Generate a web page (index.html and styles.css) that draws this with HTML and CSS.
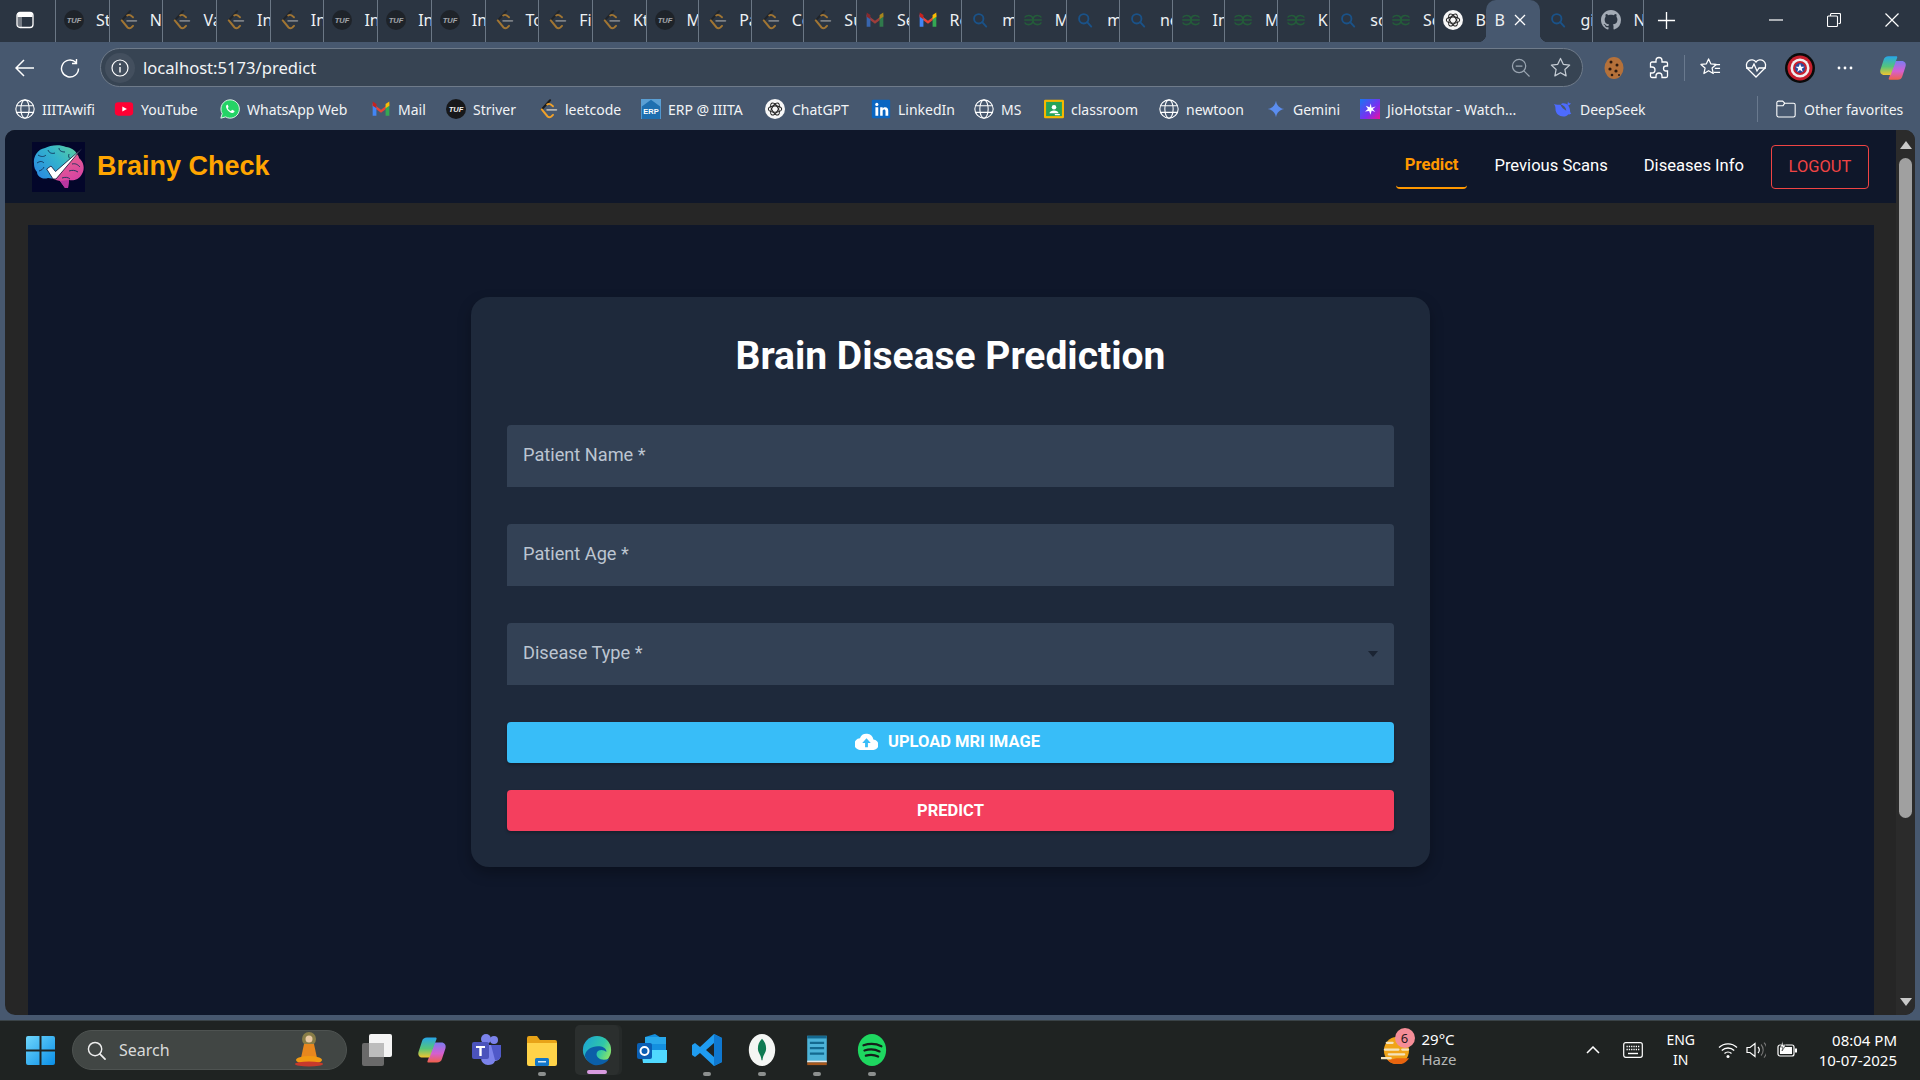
FILE: index.html
```html
<!DOCTYPE html>
<html lang="en">
<head>
<meta charset="utf-8">
<title>Brainy Check</title>
<link rel="stylesheet" href="styles.css">
</head>
<body>
<svg class="defs" width="0" height="0" aria-hidden="true">
  <defs>
    <symbol id="i-tuf" viewBox="0 0 24 24"><circle cx="12" cy="12" r="12" fill="#17181a"/><text x="12" y="15.2" text-anchor="middle" font-family="Liberation Sans" font-size="9" font-weight="700" font-style="italic" fill="#f2f2f2">TUF</text></symbol>
    <symbol id="i-lc" viewBox="0 0 24 24"><path d="M14.500 1.500 4.500 12.500" fill="none" stroke="#1b1b1b" stroke-width="2.400" stroke-linecap="round"/><path d="M4.500 12.500 11.500 21q2 1.800 4.500 0l2-2" fill="none" stroke="#f0a12a" stroke-width="2.400" stroke-linecap="round"/><path d="M11 6.500q2-1.300 4-.1l3 2.400" fill="none" stroke="#f0a12a" stroke-width="2.200" stroke-linecap="round"/><path d="M11 13h11" stroke="#b3b3b3" stroke-width="2.200" stroke-linecap="round"/></symbol>
    <symbol id="i-gmail" viewBox="0 0 24 24"><path d="M2 5.500 12 13 22 5.500V9l-10 7.500L2 9z" fill="#ea4335"/><path d="M2 5.500V20h4.500V9z" fill="#4285f4"/><path d="M22 5.500V20h-4.500V9z" fill="#34a853"/><path d="M17.500 6 22 3v5l-4.500 3z" fill="#fbbc04"/><path d="M2 3l4.500 3v5L2 8z" fill="#c5221f"/></symbol>
    <symbol id="i-search" viewBox="-4 -4 32 32"><circle cx="10" cy="10" r="7.500" fill="none" stroke="#1a5288" stroke-width="3"/><path d="m15.500 15.500 6.500 7" stroke="#1a5288" stroke-width="3" stroke-linecap="round"/></symbol>
    <symbol id="i-gfg" viewBox="0 0 24 24"><path d="M1.500 12H22.500M12 12c0-4-3-5.500-5.500-5.500-2 0-3.700 1-4.500 2.500M12 12c0 4-3 5.500-5.500 5.500-2 0-3.700-1-4.500-2.500M12 12c0-4 3-5.500 5.500-5.500 2 0 3.700 1 4.500 2.500M12 12c0 4 3 5.500 5.500 5.500 2 0 3.700-1 4.500-2.500" fill="none" stroke="#245c3a" stroke-width="1.900"/></symbol>
    <symbol id="i-gpt" viewBox="0 0 24 24"><circle cx="12" cy="12" r="12" fill="#f7f7f7"/><g fill="none" stroke="#222" stroke-width="1.300"><ellipse cx="12" cy="12" rx="8" ry="3.800"/><ellipse cx="12" cy="12" rx="8" ry="3.800" transform="rotate(60 12 12)"/><ellipse cx="12" cy="12" rx="8" ry="3.800" transform="rotate(120 12 12)"/></g></symbol>
    <symbol id="i-gh" viewBox="0 0 16 16"><path fill="#a3abb5" d="M8 0C3.58 0 0 3.58 0 8c0 3.54 2.29 6.53 5.47 7.590.4.070.55-.170.55-.380 0-.190-.010-.820-.010-1.490-2.010.370-2.530-.490-2.690-.940-.090-.230-.480-.940-.820-1.130-.280-.150-.680-.520-.010-.530.630-.010 1.080.580 1.230.820.720 1.210 1.870.870 2.330.660.070-.520.280-.870.510-1.070-1.780-.200-3.640-.890-3.640-3.950 0-.870.310-1.590.820-2.150-.080-.200-.360-1.020.080-2.120 0 0 .670-.210 2.200.820.640-.180 1.320-.270 2-.270s1.360.090 2 .270c1.530-1.040 2.200-.820 2.200-.820.440 1.100.160 1.920.080 2.120.510.560.820 1.270.820 2.150 0 3.070-1.870 3.750-3.650 3.950.290.250.540.730.540 1.480 0 1.070-.010 1.930-.010 2.200 0 .210.150.460.550.380A8.010 8.010 0 0016 8c0-4.420-3.580-8-8-8z"/></symbol>
    <symbol id="i-globe" viewBox="0 0 24 24"><g fill="none" stroke="#fff" stroke-width="1.300"><circle cx="12" cy="12" r="11"/><ellipse cx="12" cy="12" rx="5" ry="11"/><path d="M1.800 8h20.400M1.800 16h20.400"/></g></symbol>
    <symbol id="i-yt" viewBox="0 0 24 24"><rect x="1" y="4" width="22" height="16" rx="4" fill="#ff0033"/><path d="m10 9 5.500 3-5.500 3z" fill="#fff"/></symbol>
    <symbol id="i-wa" viewBox="0 0 24 24"><path d="M12 1A11 11 0 0 0 2.600 17.500L1 23l5.700-1.500A11 11 0 1 0 12 1z" fill="#25d366" stroke="#fff" stroke-width="1"/><path d="M8.500 6.800c-.6.300-1.500 1.400-1.200 3 .500 2.500 3.800 6.400 7.200 7 1.500.200 2.700-.800 2.900-1.700.100-.600-.100-.900-.400-1l-2-1c-.400-.200-.700 0-.900.300l-.600.800c-.200.200-.500.200-.800.100-1.300-.600-2.600-1.800-3.200-3-.200-.300-.100-.500.100-.700l.5-.600c.200-.300.200-.500.100-.800l-.800-2c-.200-.400-.600-.500-.900-.400z" fill="#fff"/></symbol>
    <symbol id="i-erp" viewBox="0 0 24 24"><rect width="24" height="24" fill="#5a9fd4"/><path d="M12 1 1 9v15h22V9z" fill="#1e6fb0"/><text x="12" y="18.500" text-anchor="middle" font-family="Liberation Sans" font-size="9" font-weight="700" fill="#fff">ERP</text></symbol>
    <symbol id="i-in" viewBox="0 0 24 24"><rect x="1" y="1" width="22" height="22" rx="1.500" fill="#0a66c2"/><circle cx="7" cy="6.500" r="1.900" fill="#fff"/><path d="M5.300 10h3.400v10H5.300zM11 10h3v1.400c.700-1.100 1.800-1.600 3-1.600 2.500 0 3.700 1.500 3.700 4.400V20h-3.300v-5.200c0-1.400-.500-2.200-1.700-2.200s-1.700.900-1.700 2.200V20H11z" fill="#fff"/></symbol>
    <symbol id="i-class" viewBox="0 0 24 24"><rect y="1" width="24" height="22" rx="1.500" fill="#f5b800"/><rect x="2.500" y="3.500" width="19" height="17" fill="#25a35a"/><circle cx="12" cy="10" r="2.700" fill="#fff"/><path d="M6.500 17c.5-2.200 2.700-3.300 5.500-3.300s5 1.100 5.500 3.300z" fill="#fff"/><rect x="13" y="18" width="6" height="1.500" fill="#fff"/></symbol>
    <symbol id="i-gem" viewBox="0 0 24 24"><path d="M12 2c.8 5.500 4.500 9.200 10 10-5.500.8-9.200 4.500-10 10-.8-5.500-4.500-9.200-10-10 5.500-.8 9.200-4.500 10-10z" fill="#5b8def"/></symbol>
    <symbol id="i-jio" viewBox="0 0 24 24"><defs><linearGradient id="g-jio" x1="0" y1="0" x2="1" y2="1"><stop offset="0" stop-color="#1976f2"/><stop offset=".6" stop-color="#7a2ff0"/><stop offset="1" stop-color="#f0109a"/></linearGradient></defs><rect width="24" height="24" fill="url(#g-jio)"/><path d="M13 5.500l.8 5 5-1.500-3.500 3 3 3.500-4.200-1.700L12.500 19 11 14.500 6 15l3.500-3L7 8l4.500 2z" fill="#fff"/></symbol>
    <symbol id="i-ds" viewBox="0 0 24 24"><path d="M1 6c1.500 1.500 2 3.500 2 6 0 5.500 4.500 9 9.500 9 2.500 0 4.500-1 6-2.800 1 .5 2.200.3 3.500-.700-1-.500-1.500-1.500-1.500-3 0-5.500-3.500-9.500-8-9.500-1.500 0-2.500.500-3 1.500 3 .500 6 3 6.500 7.500-3-1-6-4.500-7-7C7 7 4 7 1 6z" fill="#4d6bfe"/><path d="M18 3c.5 1.500 1.500 2.200 3.500 2.200-1 1.800-2.500 3-4.500 3z" fill="#4d6bfe"/></symbol>
    <symbol id="i-folder" viewBox="0 0 24 24"><path d="M1 4.500a2 2 0 0 1 2-2h5l2.500 2.500H21a2 2 0 0 1 2 2v12.500a2 2 0 0 1-2 2H3a2 2 0 0 1-2-2zM1 8h7.500l2-3" fill="none" stroke="#fff" stroke-width="1.300"/></symbol>
    <symbol id="i-copilot" viewBox="0 0 24 24"><defs><linearGradient id="g-c1" x1="0" y1="0" x2="0" y2="1"><stop offset="0" stop-color="#27a6e8"/><stop offset=".55" stop-color="#55c57a"/><stop offset="1" stop-color="#f2c530"/></linearGradient><linearGradient id="g-c2" x1="0" y1="0" x2="0" y2="1"><stop offset="0" stop-color="#7b7cf0"/><stop offset=".55" stop-color="#d55fd0"/><stop offset="1" stop-color="#f0604a"/></linearGradient></defs><path d="M16 22H9.500c-1 0-1.500-.5-1-1.500L14 6h5.500c2.500 0 4 2 3.300 4.500L20 19c-.5 2-2 3-4 3z" fill="url(#g-c2)"/><path d="M8 2h6.500c1 0 1.500.5 1 1.500L10 18H4.500C2 18 .5 16 1.200 13.500L4 5c.5-2 2-3 4-3z" fill="url(#g-c1)"/></symbol>
  </defs>
</svg>

<header class="tabstrip">
  <svg class="panel-icon" viewBox="0 0 18 18"><rect x="1" y="1.500" width="16" height="15" rx="3" fill="none" stroke="#fff" stroke-width="1.300"/><rect x="1.500" y="2" width="15" height="4" fill="#fff"/><rect x="1.500" y="2" width="4.500" height="14" fill="#fff" opacity=".35"/></svg>
  <div class="tabs">
    <div class="tab"><svg class="fav dim"><use href="#i-tuf"/></svg><span>St</span></div>
    <div class="tab"><svg class="fav dim"><use href="#i-lc"/></svg><span>N</span></div>
    <div class="tab"><svg class="fav dim"><use href="#i-lc"/></svg><span>Va</span></div>
    <div class="tab"><svg class="fav dim"><use href="#i-lc"/></svg><span>In</span></div>
    <div class="tab"><svg class="fav dim"><use href="#i-lc"/></svg><span>In</span></div>
    <div class="tab"><svg class="fav dim"><use href="#i-tuf"/></svg><span>In</span></div>
    <div class="tab"><svg class="fav dim"><use href="#i-tuf"/></svg><span>In</span></div>
    <div class="tab"><svg class="fav dim"><use href="#i-tuf"/></svg><span>In</span></div>
    <div class="tab"><svg class="fav dim"><use href="#i-lc"/></svg><span>To</span></div>
    <div class="tab"><svg class="fav dim"><use href="#i-lc"/></svg><span>Fi</span></div>
    <div class="tab"><svg class="fav dim"><use href="#i-lc"/></svg><span>Kt</span></div>
    <div class="tab"><svg class="fav dim"><use href="#i-tuf"/></svg><span>M</span></div>
    <div class="tab"><svg class="fav dim"><use href="#i-lc"/></svg><span>Pa</span></div>
    <div class="tab"><svg class="fav dim"><use href="#i-lc"/></svg><span>Co</span></div>
    <div class="tab"><svg class="fav dim"><use href="#i-lc"/></svg><span>Su</span></div>
    <div class="tab"><svg class="fav dim"><use href="#i-gmail"/></svg><span>Se</span></div>
    <div class="tab"><svg class="fav"><use href="#i-gmail"/></svg><span>Re</span></div>
    <div class="tab"><svg class="fav"><use href="#i-search"/></svg><span>m</span></div>
    <div class="tab"><svg class="fav"><use href="#i-gfg"/></svg><span>M</span></div>
    <div class="tab"><svg class="fav"><use href="#i-search"/></svg><span>m</span></div>
    <div class="tab"><svg class="fav"><use href="#i-search"/></svg><span>ne</span></div>
    <div class="tab"><svg class="fav"><use href="#i-gfg"/></svg><span>In</span></div>
    <div class="tab"><svg class="fav"><use href="#i-gfg"/></svg><span>M</span></div>
    <div class="tab"><svg class="fav"><use href="#i-gfg"/></svg><span>K</span></div>
    <div class="tab"><svg class="fav"><use href="#i-search"/></svg><span>sc</span></div>
    <div class="tab"><svg class="fav"><use href="#i-gfg"/></svg><span>Sc</span></div>
    <div class="tab tab-plain"><svg class="fav"><use href="#i-gpt"/></svg><span>Br</span></div>
    <div class="tab tab-active"><span>B</span><svg class="tab-x" viewBox="0 0 12 12"><path d="m1 1 10 10M11 1 1 11" stroke="#fff" stroke-width="1.300"/></svg></div>
    <div class="tab tab-after"><svg class="fav"><use href="#i-search"/></svg><span>gi</span></div>
    <div class="tab tab-after"><svg class="fav"><use href="#i-gh"/></svg><span>N</span></div>
  </div>
  <svg class="plus" viewBox="0 0 20 20"><path d="M10 1v18M1 10h18" stroke="#fff" stroke-width="1.400"/></svg>
  <div class="winctl">
    <svg viewBox="0 0 14 14"><path d="M0 7h14" stroke="#fff" stroke-width="1.200"/></svg>
    <svg viewBox="0 0 14 14"><path d="M3.500 2.500V1.500a1 1 0 0 1 1-1h8a1 1 0 0 1 1 1v8a1 1 0 0 1-1 1h-1M1.500 3h8a1 1 0 0 1 1 1v8.500a1 1 0 0 1-1 1h-8a1 1 0 0 1-1-1V4a1 1 0 0 1 1-1z" fill="none" stroke="#fff" stroke-width="1.100"/></svg>
    <svg viewBox="0 0 14 14"><path d="m.5.500 13 13M13.500.500l-13 13" stroke="#fff" stroke-width="1.200"/></svg>
  </div>
</header>

<div class="toolbar">
  <svg class="tb-back" viewBox="0 0 20 20"><path d="M1 10h18M9 2l-8 8 8 8" fill="none" stroke="#fff" stroke-width="1.500"/></svg>
  <svg class="tb-reload" viewBox="0 0 20 20"><path d="M16 4.500A8.500 8.500 0 1 0 18.500 10.500M16.500 1v4.500H12" fill="none" stroke="#fff" stroke-width="1.400"/></svg>
  <div class="address">
    <span class="addr-info"><svg viewBox="0 0 18 18"><circle cx="9" cy="9" r="8" fill="none" stroke="#fff" stroke-width="1.200"/><path d="M9 8v5.500" stroke="#fff" stroke-width="1.400"/><circle cx="9" cy="5.300" r="1" fill="#fff"/></svg></span>
    <span class="addr-url">localhost:5173/predict</span>
    <svg class="addr-zoom" viewBox="0 0 20 20"><circle cx="8.500" cy="8.500" r="7" fill="none" stroke="#9aa5b1" stroke-width="1.300"/><path d="M5 8.500h7M13.500 13.500l6 6" stroke="#9aa5b1" stroke-width="1.300"/></svg>
    <svg class="addr-star" viewBox="0 0 22 22"><path d="m11 1.500 2.900 6.200 6.700.8-5 4.600 1.300 6.700L11 16.500l-5.900 3.300 1.300-6.700-5-4.600 6.700-.8z" fill="none" stroke="#c5ccd4" stroke-width="1.300" stroke-linejoin="round"/></svg>
  </div>
  <svg class="tb-cookie" viewBox="0 0 20 24"><ellipse cx="10" cy="12" rx="9.500" ry="11" fill="#b5713a"/><g fill="#2d1a10"><circle cx="7" cy="6" r="1.500"/><circle cx="13" cy="9" r="1.500"/><circle cx="6" cy="13" r="1.600"/><circle cx="12" cy="15" r="1.600"/><circle cx="8" cy="19" r="1.300"/><circle cx="15" cy="19" r="1"/></g></svg>
  <svg class="tb-puzzle" viewBox="0 0 20 24"><path d="M7 4.500a3 3 0 0 1 6 0V6h4a1.500 1.500 0 0 1 1.500 1.500V10H17a2.500 2.500 0 0 0 0 5h1.500v5a1.500 1.500 0 0 1-1.500 1.500h-4V20a3 3 0 0 0-6 0v1.500H3A1.500 1.500 0 0 1 1.500 20v-3H3a3 3 0 0 0 0-6H1.500V7.500A1.500 1.500 0 0 1 3 6h4z" fill="none" stroke="#fff" stroke-width="1.300"/></svg>
  <span class="tb-sep"></span>
  <svg class="tb-favs" viewBox="0 0 22 22"><path d="M9 2l2.300 5.200 5.700.6-4.300 3.800 1.200 5.700L9 14.400 4.100 17.300l1.200-5.700L1 7.800l5.700-.6z" fill="none" stroke="#fff" stroke-width="1.300" stroke-linejoin="round"/><path d="M15 8h6M15.500 12h5.500M14.500 16h6.500" stroke="#fff" stroke-width="1.300"/></svg>
  <svg class="tb-heart" viewBox="0 0 22 22"><path d="M11 20 2.500 11.500A5.300 5.300 0 0 1 11 5a5.300 5.300 0 0 1 8.500 6.500z" fill="none" stroke="#fff" stroke-width="1.300"/><path d="M1 11h6l2-4 3 7 2-3h7" fill="none" stroke="#fff" stroke-width="1.300"/></svg>
  <svg class="tb-avatar" viewBox="0 0 30 30"><circle cx="15" cy="15" r="15" fill="#0a0a0a"/><circle cx="15" cy="15" r="12.500" fill="#c8202e"/><circle cx="15" cy="15" r="9.500" fill="#f0f0f0"/><circle cx="15" cy="15" r="7" fill="#c8202e"/><circle cx="15" cy="15" r="5" fill="#2a4a9c"/><path d="m15 10.500 1.200 3.200h3.300l-2.700 2 1 3.200-2.800-2-2.800 2 1-3.200-2.700-2h3.300z" fill="#fff"/></svg>
  <svg class="tb-dots" viewBox="0 0 16 20"><circle cx="2" cy="10" r="1.400" fill="#fff"/><circle cx="8" cy="10" r="1.400" fill="#fff"/><circle cx="14" cy="10" r="1.400" fill="#fff"/></svg>
  <svg class="tb-copilot"><use href="#i-copilot"/></svg>
</div>

<nav class="bookmarks">
  <div class="bm"><svg><use href="#i-globe"/></svg><span>IIITAwifi</span></div>
  <div class="bm"><svg><use href="#i-yt"/></svg><span>YouTube</span></div>
  <div class="bm"><svg><use href="#i-wa"/></svg><span>WhatsApp Web</span></div>
  <div class="bm"><svg><use href="#i-gmail"/></svg><span>Mail</span></div>
  <div class="bm"><svg><use href="#i-tuf"/></svg><span>Striver</span></div>
  <div class="bm"><svg><use href="#i-lc"/></svg><span>leetcode</span></div>
  <div class="bm"><svg><use href="#i-erp"/></svg><span>ERP @ IIITA</span></div>
  <div class="bm"><svg><use href="#i-gpt"/></svg><span>ChatGPT</span></div>
  <div class="bm"><svg><use href="#i-in"/></svg><span>LinkedIn</span></div>
  <div class="bm"><svg><use href="#i-globe"/></svg><span>MS</span></div>
  <div class="bm"><svg><use href="#i-class"/></svg><span>classroom</span></div>
  <div class="bm"><svg><use href="#i-globe"/></svg><span>newtoon</span></div>
  <div class="bm"><svg><use href="#i-gem"/></svg><span>Gemini</span></div>
  <div class="bm"><svg><use href="#i-jio"/></svg><span>JioHotstar - Watch...</span></div>
  <div class="bm"><svg><use href="#i-ds"/></svg><span>DeepSeek</span></div>
  <div class="bm bm-other"><svg><use href="#i-folder"/></svg><span>Other favorites</span></div>
</nav>

<div class="viewport">
  <div class="page">
    <div class="navbar">
      <svg class="logo" viewBox="0 0 53 50">
        <defs>
          <linearGradient id="g-left" x1="0" y1=".7" x2="1" y2="0"><stop offset="0" stop-color="#2b8fe0"/><stop offset=".5" stop-color="#33b4cc"/><stop offset="1" stop-color="#5fcf9c"/></linearGradient>
          <linearGradient id="g-right" x1="0" y1="0" x2=".4" y2="1"><stop offset="0" stop-color="#ec6a8a"/><stop offset="1" stop-color="#d43fa5"/></linearGradient>
        </defs>
        <rect width="53" height="50" fill="#03062a"/>
        <path d="M2 22C1 14 6 7 13 6 18 3 28 2 34 5c5 .5 9 3 11 7L23 36c-3 1-5 0-7 0-6 2-11-2-11-6-2-2-3-5-3-8z" fill="url(#g-left)"/>
        <path d="M45 12c1 1 2 3 2 4 5 4 6 11 3 16-3 6-9 7-13 6l-1 8h-3l-5-7c-3-1-5-1-8-3z" fill="url(#g-right)"/>
        <path d="M28 39l5 7h3l1-8z" fill="#b8369f"/>
        <path d="M6 13c3 2 6 2 8 0M16 8c1 3 4 4 7 3M27 6c0 3 3 4 6 4M5 21c3-2 5-2 7 0M7 29c3-1 4-2 5-4M37 12c-1 3 0 4 2 5M40 22c4-1 6 1 8 3M37 29c3-1 6-1 9 1M30 36c3-1 6-1 8 1" fill="none" stroke="#12335a" stroke-width=".9"/>
        <path d="M14.700 27 19 24 23.500 29.500 49.700 6.700 24 37H21z" fill="#fff" stroke="#0b1030" stroke-width=".8"/>
      </svg>
      <span class="brand">Brainy Check</span>
      <div class="nav-links">
        <a class="nav-link nav-active">Predict</a>
        <a class="nav-link">Previous Scans</a>
        <a class="nav-link">Diseases Info</a>
        <a class="logout">LOGOUT</a>
      </div>
    </div>
    <main class="main">
      <section class="card">
        <h1 class="card-title">Brain Disease Prediction</h1>
        <div class="field"><span class="field-label">Patient Name *</span></div>
        <div class="field"><span class="field-label">Patient Age *</span></div>
        <div class="field"><span class="field-label">Disease Type *</span><span class="caret"></span></div>
        <button class="btn btn-upload" type="button"><svg viewBox="0 0 24 18"><path d="M19.300 7A7.500 7.500 0 0 0 5 5.500 6 6 0 0 0 6 18h13a5 5 0 0 0 .300-11z" fill="#fff"/><path d="M12 5.500 7.500 10.500H10.500V15h3V10.500h3z" fill="#38bdf8"/></svg>UPLOAD MRI IMAGE</button>
        <button class="btn btn-predict" type="button">PREDICT</button>
      </section>
    </main>
  </div>
  <div class="scrollbar">
    <span class="sb-up"></span>
    <span class="sb-thumb"></span>
    <span class="sb-down"></span>
  </div>
</div>

<footer class="taskbar">
  <svg class="start" viewBox="0 0 29 29"><defs><linearGradient id="g-win" x1="0" y1="0" x2="1" y2="1"><stop offset="0" stop-color="#6fd6fb"/><stop offset="1" stop-color="#0a8fe8"/></linearGradient></defs><path fill="url(#g-win)" d="M0 2a2 2 0 0 1 2-2h11.500v13.500H0zM15.500 0H27a2 2 0 0 1 2 2v11.500H15.500zM0 15.500h13.500V29H2a2 2 0 0 1-2-2zM15.500 15.500H29V27a2 2 0 0 1-2 2H15.500z"/></svg>
  <div class="searchbox">
    <svg viewBox="0 0 20 20"><circle cx="8.500" cy="8.500" r="7" fill="none" stroke="#eee" stroke-width="1.500"/><path d="m13.500 13.500 5.500 5.500" stroke="#eee" stroke-width="1.800" stroke-linecap="round"/></svg>
    <span>Search</span>
    <svg class="sage" viewBox="0 0 30 36"><circle cx="15" cy="7" r="7" fill="#b7a24a" opacity=".6"/><circle cx="15" cy="7" r="3.500" fill="#e9c9a5"/><path d="M10 12h10l3 14H7z" fill="#e8871e"/><ellipse cx="15" cy="28" rx="13" ry="4" fill="#f29a12"/><ellipse cx="15" cy="32" rx="14" ry="2.500" fill="#c7392c"/></svg>
  </div>
  <div class="apps">
    <div class="app"><svg viewBox="0 0 30 32"><rect x="0" y="9" width="22" height="23" rx="2" fill="#6a6a6a"/><rect x="7" y="0" width="23" height="23" rx="2" fill="#f4f4f4"/><rect x="7" y="9" width="15" height="14" fill="#bdbdbd"/></svg></div>
    <div class="app"><svg><use href="#i-copilot"/></svg></div>
    <div class="app"><svg viewBox="0 0 30 32"><circle cx="22" cy="6" r="4" fill="#7b83eb"/><circle cx="14" cy="5" r="5" fill="#7b83eb"/><path d="M12 11h17v10a6 6 0 0 1-6 6c-1 3-4 4-7 4a7 7 0 0 1-7-7V11z" fill="#7b83eb"/><path d="M19 11h10v10a5 5 0 0 1-6 5z" fill="#5059c9"/><rect x="0" y="8" width="17" height="17" rx="2" fill="#4b53bc"/><path d="M4 12h9v2h-3.300v8H7.300v-8H4z" fill="#fff"/></svg></div>
    <div class="app app-open"><svg viewBox="0 0 30 32"><path d="M0 4a2 2 0 0 1 2-2h8l3 4h15a2 2 0 0 1 2 2v4H0z" fill="#e8a317"/><path d="M0 9h30v21a2 2 0 0 1-2 2H2a2 2 0 0 1-2-2z" fill="#ffd349"/><rect x="8" y="24" width="14" height="8" rx="1.500" fill="#1276c9"/><rect x="11" y="27" width="8" height="1.500" fill="#cfe7fa"/></svg></div>
    <div class="app app-active"><svg viewBox="0 0 30 34"><defs><linearGradient id="g-edge" x1="0" y1="0" x2="1" y2=".5"><stop offset="0" stop-color="#1aa0d8"/><stop offset=".7" stop-color="#2fc8a8"/><stop offset="1" stop-color="#7ee070"/></linearGradient></defs><circle cx="15" cy="17" r="15" fill="url(#g-edge)"/><path d="M2 23c2 7 9 11 15 10 5-1 9-3 11-7-4 2-9 2-12-1-2-2-2-5 0-7 3-2 7-1 9 1 0-4-4-6-9-6-7 0-13 4-14 10z" fill="#0b5fa8"/></svg></div>
    <div class="app"><svg viewBox="0 0 30 32"><path d="M8 3 18 0l11 7v20a2 2 0 0 1-2 2H10z" fill="#1490df"/><path d="M8 3h10v7H8zM18 3h11v7H18z" fill="#28a8ea"/><path d="M4 16h26v11a2 2 0 0 1-2 2H6z" fill="#50d9ff"/><rect x="0" y="9" width="15" height="16" rx="2" fill="#0a5fb4"/><circle cx="7.500" cy="17" r="4" fill="none" stroke="#fff" stroke-width="2"/></svg></div>
    <div class="app app-open"><svg viewBox="0 0 30 32"><path d="M22 0 30 4v24l-8 4L8 19l-5 4-3-2v-10l3-2 5 4zM22 9l-8 7 8 7z" fill="#1f9cf0"/><path d="M22 0l8 4v24l-8 4z" fill="#0f78d0"/></svg></div>
    <div class="app app-open"><svg viewBox="0 0 28 34"><ellipse cx="14" cy="17" rx="14" ry="17" fill="#f4f6f4"/><path d="M14 5c4 4 5 9 4 13-1 3-3 5-3.500 10h-1C13 23 11 21 10 18c-1-4 0-9 4-13z" fill="#0f7a52"/></svg></div>
    <div class="app app-open"><svg viewBox="0 0 24 36"><rect x="1" y="2" width="22" height="30" fill="#4cb3d8"/><path d="M1 30h22v2H1z" fill="#e8e8e8"/><path d="M1 32h22v3H1z" fill="#a8581c"/><path d="M1 2h22v3H1z" fill="#14688f"/><path d="M4 10h16M4 16h16M4 22h16" stroke="#13698f" stroke-width="2.500"/></svg></div>
    <div class="app app-open"><svg viewBox="0 0 30 34"><ellipse cx="15" cy="17" rx="15" ry="17" fill="#1ed760"/><path d="M6 12c6-2 13-2 19 1M7 17.500c5-1.500 11-1.500 16 1M8.500 23c4-1 9-1 13 1" fill="none" stroke="#14201a" stroke-width="2.400" stroke-linecap="round"/></svg></div>
  </div>
  <div class="weather">
    <svg class="w-icon" viewBox="0 0 30 28"><ellipse cx="16" cy="14" rx="13" ry="14" fill="#f0a419"/><path d="M16 22h13a13 14 0 0 1-13 6 13 14 0 0 1-9-4z" fill="#e8640f"/><path d="M6 6h6M4 13h14M22 13h6M8 18h16M0 22h10" stroke="#f3e3bd" stroke-width="2.400" stroke-linecap="round"/></svg>
    <span class="w-badge">6</span>
    <div class="w-text"><span>29°C</span><span class="w-sub">Haze</span></div>
  </div>
  <div class="tray">
    <svg class="t-chev" viewBox="0 0 14 8"><path d="m1 7 6-6 6 6" fill="none" stroke="#fff" stroke-width="1.500"/></svg>
    <svg class="t-kb" viewBox="0 0 20 16"><rect x=".7" y=".7" width="18.600" height="14.600" rx="2" fill="none" stroke="#fff" stroke-width="1.200"/><path d="M3.500 4.500h13M3.500 7.500h13" stroke="#fff" stroke-width="1.400" stroke-dasharray="1.300 1"/><path d="M5 11.500h10" stroke="#fff" stroke-width="1.400"/></svg>
    <div class="t-lang"><span>ENG</span><span>IN</span></div>
    <svg class="t-wifi" viewBox="0 0 20 18"><path d="M1 6.500a13 13 0 0 1 18 0M3.800 9.500a9 9 0 0 1 12.400 0M6.500 12.500a5 5 0 0 1 7 0" fill="none" stroke="#fff" stroke-width="1.300"/><circle cx="10" cy="15.500" r="1.500" fill="#fff"/></svg>
    <svg class="t-vol" viewBox="0 0 20 18"><path d="M1 6.500h3L9 2.500v13l-5-4H1z" fill="none" stroke="#fff" stroke-width="1.200"/><path d="M12 6a4.500 4.500 0 0 1 0 6" fill="none" stroke="#fff" stroke-width="1.200"/><path d="M15 3.500a8 8 0 0 1 0 11M18 1.500a11 11 0 0 1 0 15" fill="none" stroke="#777" stroke-width="1.100"/></svg>
    <svg class="t-bat" viewBox="0 0 20 18"><rect x="1" y="4" width="16" height="11" rx="2" fill="none" stroke="#fff" stroke-width="1.200"/><rect x="3" y="6" width="12" height="7" fill="#fff"/><rect x="18" y="7.500" width="2" height="4" fill="#fff"/><path d="M6 0 3 6h3l-1 4 4-6H6z" fill="#fff" stroke="#1f2322" stroke-width=".6"/></svg>
    <div class="t-clock"><span>08:04 PM</span><span>10-07-2025</span></div>
  </div>
</footer>
</body>
</html>
```

FILE: styles.css
```css
* { box-sizing: border-box; }
html, body { margin: 0; padding: 0; }
body {
  width: 1920px;
  height: 1080px;
  overflow: hidden;
  display: flex;
  flex-direction: column;
  background: #47586f;
  font-family: "Noto Sans", "Open Sans", sans-serif;
  color: #fff;
}
.defs { position: absolute; }

/* Tab strip */
.tabstrip {
  height: 42px;
  flex: none;
  display: flex;
  align-items: center;
  padding-bottom: 2px;
  background: #2b3542;
}
.panel-icon { width: 18px; height: 18px; margin-left: 16px; flex: none; }
.tabs { display: flex; height: 42px; margin-left: 21px; flex: none; align-self: flex-start; }
.tab {
  width: 52.6px;
  height: 42px;
  flex: none;
  display: flex;
  align-items: center;
  padding: 0 0 2px 8px;
  gap: 12px;
  overflow: hidden;
  border-left: 1px solid #6b7785;
  font-size: 16px;
  color: #eef1f4;
  white-space: nowrap;
  position: relative;
}
.tab span { flex: none; }
.tab:nth-child(-n+11) { width: 53.7px; }
.fav { width: 20px; height: 20px; flex: none; }
.fav.dim { opacity: .6; }
.tab-active {
  width: 54px;
  background: #47586f;
  border: 0;
  border-radius: 10px 10px 0 0;
  padding-left: 8px;
  gap: 9px;
  overflow: visible;
}
.tab-active::before,
.tab-active::after {
  content: "";
  position: absolute;
  bottom: 0;
  width: 8px;
  height: 8px;
}
.tab-active::before {
  left: -8px;
  background: radial-gradient(circle at 0 0, transparent 8px, #47586f 8.5px);
}
.tab-active::after {
  right: -8px;
  background: radial-gradient(circle at 100% 0, transparent 8px, #47586f 8.5px);
}
.tab-plain { width: 52px; }
.tab-after { width: 52px; }
.tab-active + .tab { border-left: 0; }
.tab-after:last-child { border-right: 1px solid #6b7785; }
.tab-x { width: 12px; height: 12px; flex: none; }
.plus { width: 19px; height: 19px; margin-left: 13px; flex: none; }
.winctl {
  margin-left: auto;
  display: flex;
  gap: 44px;
  padding-right: 21px;
  align-items: center;
}
.winctl svg { width: 14px; height: 14px; }

/* Toolbar */
.toolbar {
  height: 48px;
  flex: none;
  display: flex;
  align-items: center;
  padding: 6px 0 3px;
}
.tb-back { width: 20px; height: 20px; margin-left: 15px; flex: none; }
.tb-reload { width: 20px; height: 20px; margin-left: 25px; flex: none; }
.address {
  width: 1483px;
  height: 39px;
  margin-left: 20px;
  flex: none;
  display: flex;
  align-items: center;
  background: #374453;
  border: 1px solid #6f7b8a;
  border-radius: 20px;
  padding-left: 4px;
}
.addr-info {
  width: 30px;
  height: 30px;
  border-radius: 50%;
  background: #434f5e;
  display: flex;
  align-items: center;
  justify-content: center;
  flex: none;
}
.addr-info svg { width: 18px; height: 18px; }
.addr-url { margin-left: 8px; font-size: 16.6px; color: #f2f4f6; }
.addr-zoom { width: 19px; height: 19px; margin-left: auto; flex: none; }
.addr-star { width: 21px; height: 21px; margin-left: 20px; margin-right: 11px; flex: none; }
.tb-cookie { width: 20px; height: 24px; margin-left: 21px; flex: none; }
.tb-puzzle { width: 20px; height: 24px; margin-left: 25px; flex: none; }
.tb-sep { width: 1px; height: 26px; background: #69798e; margin-left: 15px; flex: none; }
.tb-favs { width: 21px; height: 21px; margin-left: 15px; flex: none; }
.tb-heart { width: 22px; height: 22px; margin-left: 24px; flex: none; }
.tb-avatar { width: 30px; height: 30px; margin-left: 18px; flex: none; }
.tb-dots { width: 16px; height: 20px; margin-left: 22px; flex: none; }
.tb-copilot { width: 28px; height: 28px; margin-left: 26px; flex: none; }

/* Bookmarks */
.bookmarks {
  height: 40px;
  flex: none;
  display: grid;
  grid-template-columns: 99px 106px 151px 75px 92px 103px 124px 106px 103px 70px 115px 107px 94px 193px 204px 1fr;
  align-items: center;
  padding: 0 0 2px 15px;
  font-size: 14px;
  color: #f2f4f6;
}
.bm { display: flex; align-items: center; gap: 7px; white-space: nowrap; }
.bm svg { width: 20px; height: 20px; flex: none; }
.bm-other { border-left: 1px solid #69798e; padding-left: 18px; height: 26px; gap: 8px; }

/* Browser viewport */
.viewport {
  height: 885px;
  flex: none;
  margin: 0 5px;
  display: flex;
  border-radius: 10px;
  overflow: hidden;
  background: #262626;
}
.page { flex: 1; display: flex; flex-direction: column; min-width: 0; }
.navbar {
  height: 73px;
  flex: none;
  display: flex;
  align-items: center;
  background: #0f172a;
  padding: 0 27px;
  font-family: Roboto, sans-serif;
}
.logo { width: 53px; height: 50px; flex: none; }
.brand {
  margin: 0 0 1px 12px;
  font-family: "Liberation Sans", Arial, sans-serif;
  font-weight: 700;
  font-size: 27px;
  color: #ffa500;
}
.nav-links { margin-left: auto; display: flex; align-items: center; gap: 18px; height: 44px; }
.nav-link {
  height: 44px;
  padding: 0 9px 3px;
  display: flex;
  align-items: center;
  font-size: 16.6px;
  font-weight: 400;
  color: #fff;
  border-radius: 4px;
}
.nav-active {
  color: #ff9800;
  font-weight: 700;
  border-bottom: 2px solid #ff9800;
  padding-bottom: 3px;
}
.logout {
  width: 98px;
  height: 44px;
  display: flex;
  align-items: center;
  justify-content: center;
  padding-bottom: 1px;
  border: 1px solid #ef4444;
  border-radius: 4px;
  color: #ef4444;
  font-size: 16.5px;
}
.main {
  flex: 1;
  margin: 22px 22px 0 23px;
  padding: 72px 1px 0 0;
  background: #0f172a;
  display: flex;
  flex-direction: column;
  align-items: center;
  font-family: Roboto, sans-serif;
}
.card {
  width: 959px;
  height: 570px;
  flex: none;
  background: #1e293b;
  border-radius: 18px;
  padding: 36px;
  box-shadow: 0 6px 14px rgba(0, 0, 0, .28);
  display: flex;
  flex-direction: column;
  gap: 37px;
}
.card-title {
  margin: 0 0 11px;
  height: 44px;
  line-height: 46px;
  font-size: 39px;
  font-weight: 700;
  text-align: center;
  color: #fff;
}
.field {
  height: 62px;
  flex: none;
  background: #334155;
  border-radius: 4px 4px 0 0;
  display: flex;
  align-items: flex-start;
  justify-content: space-between;
  padding: 18px 16px 0;
  font-size: 18.2px;
  line-height: 24px;
  color: #bcc5d1;
}
.caret {
  width: 0;
  height: 0;
  margin-top: 10px;
  border-left: 5.5px solid transparent;
  border-right: 5.5px solid transparent;
  border-top: 6px solid #1b2433;
}
.btn {
  height: 41px;
  flex: none;
  border: 0;
  border-radius: 4px;
  padding: 0 0 2px;
  display: flex;
  align-items: center;
  justify-content: center;
  gap: 10px;
  color: #fff;
  font-family: Roboto, sans-serif;
  font-size: 16.5px;
  font-weight: 700;
  box-shadow: 0 2px 3px rgba(0, 0, 0, .25);
}
.btn svg { width: 23px; height: 17px; }
.btn-upload { background: #38bdf8; padding-right: 6px; }
.btn-predict { background: #f43f5e; margin-top: -10px; padding-bottom: 1px; }

/* Scrollbar */
.scrollbar {
  width: 19px;
  flex: none;
  background: #2b2b2b;
  display: flex;
  flex-direction: column;
  align-items: center;
  padding: 11px 0 9px;
}
.sb-up, .sb-down { width: 0; height: 0; border-left: 6.5px solid transparent; border-right: 6.5px solid transparent; flex: none; }
.sb-up { border-bottom: 8px solid #c8c8c8; }
.sb-down { border-top: 8px solid #c8c8c8; margin-top: auto; }
.sb-thumb { width: 13px; height: 660px; margin-top: 9px; background: #a0a0a0; border-radius: 7px; flex: none; }

/* Taskbar */
.taskbar {
  margin-top: 5px;
  height: 60px;
  flex: none;
  display: flex;
  align-items: center;
  padding-bottom: 1px;
  background: #1f2322;
  border-top: 1px solid #3a4347;
  font-size: 14px;
}
.start { width: 29px; height: 29px; margin-left: 26px; flex: none; }
.searchbox {
  width: 275px;
  height: 40px;
  margin-left: 17px;
  flex: none;
  display: flex;
  align-items: center;
  border-radius: 20px;
  background: #414644;
  border: 1px solid #4e5351;
  padding-left: 14px;
  font-size: 16px;
  color: #d9dbda;
}
.searchbox svg { width: 19px; height: 19px; flex: none; }
.searchbox span { margin-left: 13px; }
.searchbox .sage { width: 30px; height: 38px; margin-left: auto; margin-right: 22px; }
.apps { display: flex; margin-left: 2.5px; flex: none; }
.app {
  width: 55px;
  height: 50px;
  flex: none;
  display: flex;
  align-items: center;
  justify-content: center;
  position: relative;
}
.app svg { width: 30px; height: 32px; }
.app-open::after {
  content: "";
  position: absolute;
  left: 23.5px;
  bottom: -1px;
  width: 8px;
  height: 4px;
  border-radius: 2px;
  background: #8c8f8e;
}
.app-active { background: #2b2f2e; width: 44px; margin: 0 5.5px; border-radius: 5px; box-shadow: 3px 0 0 #262a29; }
.app-active::after {
  content: "";
  position: absolute;
  left: 12px;
  bottom: 1px;
  width: 20px;
  height: 4px;
  border-radius: 2px;
  background: #d89be0;
}
.weather {
  margin-left: 481px;
  display: flex;
  align-items: center;
  position: relative;
  flex: none;
}
.w-icon { width: 29px; height: 27px; flex: none; }
.w-badge {
  position: absolute;
  left: 14px;
  top: -3px;
  width: 20px;
  height: 20px;
  border-radius: 50%;
  background: #f58d97;
  color: #2a1a1c;
  display: flex;
  align-items: center;
  justify-content: center;
  font-size: 13px;
}
.w-text { margin: -2px 0 0 12px; display: flex; flex-direction: column; line-height: 20px; font-size: 15px; }
.w-sub { color: #b5b8b7; }
.tray { margin-left: auto; display: flex; align-items: center; padding-right: 23px; flex: none; }
.t-chev { width: 14px; height: 8px; flex: none; }
.t-kb { width: 20px; height: 16px; margin-left: 23px; flex: none; }
.t-lang { width: 38px; margin-left: 19px; display: flex; flex-direction: column; align-items: center; line-height: 20px; }
.t-wifi { width: 20px; height: 18px; margin-left: 18px; flex: none; }
.t-vol { width: 20px; height: 18px; margin-left: 8px; flex: none; }
.t-bat { width: 20px; height: 18px; margin-left: 11px; flex: none; }
.t-clock { margin: -1px 0 0 22px; display: flex; flex-direction: column; align-items: flex-end; line-height: 20px; font-size: 15px; }
```
